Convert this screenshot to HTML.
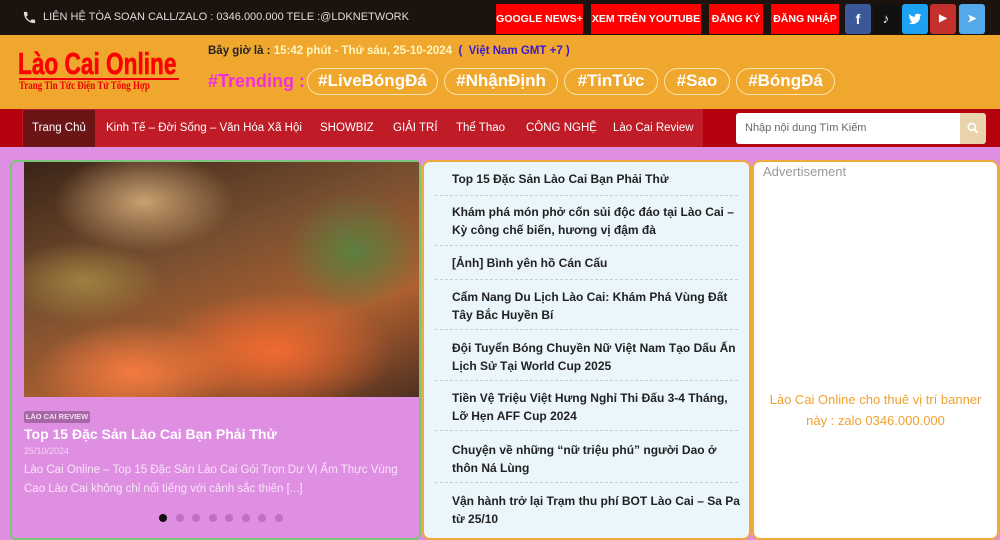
<!DOCTYPE html>
<html><head><meta charset="utf-8"><style>
*{box-sizing:border-box;margin:0;padding:0}
body{width:1000px;height:533px;overflow:hidden;background:#df8fe2;font-family:"Liberation Sans",sans-serif;position:relative}
.top{position:absolute;left:0;top:0;width:1000px;height:35px;background:#1c130f}
.top .c{position:absolute;left:43px;top:11px;color:#ddd;font-size:11px;white-space:nowrap}
.rb{position:absolute;top:4px;height:30px;background:#f00;color:#fff;font-weight:bold;font-size:10.5px;line-height:30px;text-align:center;white-space:nowrap}
.sb{position:absolute;top:4px;width:26px;height:30px;border-radius:3px;color:#fff;font-weight:bold;font-size:14px;text-align:center;line-height:30px}
.hd{position:absolute;left:0;top:35px;width:1000px;height:74px;background:#f0a72e}
.logo{position:absolute;left:18px;top:46px;color:#f00;font-weight:bold;font-size:31px;white-space:nowrap;transform:scaleX(0.73);transform-origin:left;-webkit-text-stroke:0.6px #f00}
.logo2{position:absolute;left:19px;top:78px;color:#e00;font-family:"Liberation Serif",serif;font-size:11.5px;font-weight:bold;border-top:2px solid #e00;white-space:nowrap;width:205px;transform:scaleX(0.78);transform-origin:left}
.time{position:absolute;left:208px;top:45px;font-size:11.5px;font-weight:bold;color:#222;white-space:nowrap}
.tr{position:absolute;left:208px;top:71px;color:#f030e0;font-size:18px;font-weight:bold}
.tag{position:absolute;top:68px;height:27px;border:1.5px solid #fbe5b0;border-radius:14px;color:#fff;font-weight:bold;font-size:17px;line-height:24px;text-align:center;white-space:nowrap}
.nav{position:absolute;left:0;top:109px;width:1000px;height:38px;background:#b5000e}
.navi{position:absolute;left:22px;top:0;width:681px;height:38px;background:#c01c27}
.nav span{position:absolute;top:13px;color:#fff;font-size:11.5px;white-space:nowrap}
.act{position:absolute;left:23px;top:1px;width:72px;height:37px;background:#6b1517}
.srch{position:absolute;left:736px;top:113px;width:224px;height:31px;background:#fff;border-radius:3px 0 0 3px;font-size:11px;color:#666;padding:9px 0 0 9px}
.sbtn{position:absolute;left:960px;top:113px;width:26px;height:31px;background:#e8d3ab;border-radius:0 3px 3px 0}
.left{position:absolute;left:10px;top:160px;width:411px;height:380px;border:2px solid #7bc47b;border-radius:6px;background:#df8fe2}
.img{position:absolute;left:24px;top:162px;width:395px;height:235px;background:
radial-gradient(ellipse 90px 50px at 120px 40px,#c9a070,transparent),
radial-gradient(ellipse 120px 60px at 250px 190px,#f06a30,transparent),
radial-gradient(ellipse 100px 50px at 110px 210px,#f47a40,transparent),
radial-gradient(ellipse 70px 60px at 330px 90px,#5c8040,transparent),
radial-gradient(ellipse 80px 40px at 60px 120px,#a08040,transparent),
linear-gradient(160deg,#3a2418,#7a5030 40%,#b06030 70%,#503020)}
.mid{position:absolute;left:422px;top:160px;width:329px;height:380px;background:#eaf6fc;border:2px solid #f0a83a;border-radius:8px}
.it{position:absolute;left:452px;width:292px;font-size:12px;font-weight:bold;color:#222;line-height:18px}
.sep{position:absolute;left:435px;width:303px;border-top:1px dashed #ccc}
.right{position:absolute;left:752px;top:160px;width:247px;height:380px;background:#fff;border:2px solid #f0a83a;border-radius:8px}
.dot{position:absolute;top:514px;width:8px;height:8px;border-radius:50%;background:#c070c0}
</style></head><body>
<div class="top"><svg style="position:absolute;left:22px;top:10px" width="15" height="15" viewBox="0 0 24 24"><path fill="#ddd" d="M6.6 10.8c1.4 2.8 3.8 5.1 6.6 6.6l2.2-2.2c.3-.3.7-.4 1-.2 1.1.4 2.3.6 3.6.6.6 0 1 .4 1 1V20c0 .6-.4 1-1 1C10.6 21 3 13.4 3 4c0-.6.4-1 1-1h3.5c.6 0 1 .4 1 1 0 1.3.2 2.5.6 3.6.1.3 0 .7-.2 1z"/></svg><span class="c">LIÊN HỆ TÒA SOẠN CALL/ZALO : 0346.000.000 TELE :@LDKNETWORK</span>
<div class="rb" style="left:496px;width:87px">GOOGLE NEWS+</div>
<div class="rb" style="left:591px;width:110px">XEM TRÊN YOUTUBE</div>
<div class="rb" style="left:709px;width:54px">ĐĂNG KÝ</div>
<div class="rb" style="left:771px;width:68px">ĐĂNG NHẬP</div>
<div class="sb" style="left:845px;background:#3b5998">f</div>
<div class="sb" style="left:873px;background:#111;font-size:13px">♪</div>
<div class="sb" style="left:902px;background:#1da1f2"><svg width="14" height="14" viewBox="0 0 24 24" style="margin-top:8px"><path fill="#fff" d="M23 5c-.8.4-1.7.6-2.6.7.9-.6 1.6-1.4 2-2.5-.9.5-1.9.9-2.9 1.1A4.5 4.5 0 0 0 11.800 8.400 12.8 12.8 0 0 1 2.500 3.700a4.5 4.5 0 0 0 1.400 6c-.7 0-1.400-.2-2-.6 0 2.200 1.600 4 3.600 4.400-.7.2-1.400.2-2 .1.6 1.800 2.200 3.100 4.200 3.100A9 9 0 0 1 1 18.600 12.800 12.800 0 0 0 20.700 7.200z"/></svg></div>
<div class="sb" style="left:930px;background:#c4302b;font-size:10px">▶</div>
<div class="sb" style="left:959px;background:#54a9eb;font-size:11px">➤</div>
</div>
<div class="hd"></div>
<div class="logo">Lào Cai Online</div>
<div class="logo2">Trang Tin Tức Điện Tử Tổng Hợp</div>
<div class="time">Bây giờ là : <span style="color:#fff6c0">15:42 phút - Thứ sáu, 25-10-2024</span> &nbsp;<span style="color:#3a1ad0">( &nbsp;Việt Nam GMT +7 )</span></div>
<div class="tr">#Trending :</div>
<div class="tag" style="left:307px;width:131px">#LiveBóngĐá</div>
<div class="tag" style="left:444px;width:114px">#NhậnĐịnh</div>
<div class="tag" style="left:564px;width:94px">#TinTức</div>
<div class="tag" style="left:664px;width:66px">#Sao</div>
<div class="tag" style="left:736px;width:99px">#BóngĐá</div>
<div class="nav"><div class="navi"></div><div class="act"></div>
<span style="left:32px">Trang Chủ</span><span style="left:106px">Kinh Tế – Đời Sống – Văn Hóa Xã Hội</span><span style="left:320px">SHOWBIZ</span><span style="left:393px">GIẢI TRÍ</span><span style="left:456px">Thể Thao</span><span style="left:526px">CÔNG NGHỆ</span><span style="left:613px">Lào Cai Review</span></div>
<div class="srch">Nhập nội dung Tìm Kiếm</div>
<div class="sbtn"><svg style="margin:8px 6px" width="14" height="14" viewBox="0 0 24 24"><circle cx="10" cy="10" r="6" fill="none" stroke="#fff" stroke-width="3"/><path d="M14.5 14.5L20 20" stroke="#fff" stroke-width="3"/></svg></div>
<div class="left"></div>
<div class="img"></div>
<div style="position:absolute;left:24px;top:411px;width:66px;height:12px;background:#a868a8;border-radius:2px;color:#f0e0f0;font-size:7.5px;font-weight:bold;line-height:12px;text-align:center;white-space:nowrap">LÀO CAI REVIEW</div>
<div style="position:absolute;left:24px;top:426px;color:#fff;font-weight:bold;font-size:14px;white-space:nowrap">Top 15 Đặc Sản Lào Cai Bạn Phải Thử</div>
<div style="position:absolute;left:24px;top:446px;color:#f4d4f4;font-size:9px">25/10/2024</div>
<div style="position:absolute;left:24px;top:461px;width:395px;color:#f8e4f8;font-size:11.5px;line-height:19px">Lào Cai Online – Top 15 Đặc Sản Lào Cai Gói Trọn Dư Vị Ẩm Thực Vùng Cao Lào Cai không chỉ nổi tiếng với cảnh sắc thiên [...]</div>
<div class="dot" style="left:159px;background:#111"></div><div class="dot" style="left:176px"></div><div class="dot" style="left:192px"></div><div class="dot" style="left:209px"></div><div class="dot" style="left:225px"></div><div class="dot" style="left:242px"></div><div class="dot" style="left:258px"></div><div class="dot" style="left:275px"></div>
<div class="mid"></div>
<div class="it" style="top:170px">Top 15 Đặc Sản Lào Cai Bạn Phải Thử</div>
<div class="sep" style="top:195px"></div>
<div class="it" style="top:203px">Khám phá món phở cốn sủi độc đáo tại Lào Cai – Kỳ công chế biến, hương vị đậm đà</div>
<div class="sep" style="top:245px"></div>
<div class="it" style="top:254px">[Ảnh] Bình yên hồ Cán Cấu</div>
<div class="sep" style="top:279px"></div>
<div class="it" style="top:288px">Cẩm Nang Du Lịch Lào Cai: Khám Phá Vùng Đất Tây Bắc Huyền Bí</div>
<div class="sep" style="top:329px"></div>
<div class="it" style="top:339px">Đội Tuyển Bóng Chuyền Nữ Việt Nam Tạo Dấu Ấn Lịch Sử Tại World Cup 2025</div>
<div class="sep" style="top:380px"></div>
<div class="it" style="top:389px">Tiền Vệ Triệu Việt Hưng Nghỉ Thi Đấu 3-4 Tháng, Lỡ Hẹn AFF Cup 2024</div>
<div class="sep" style="top:430px"></div>
<div class="it" style="top:441px">Chuyện về những “nữ triệu phú” người Dao ở thôn Ná Lùng</div>
<div class="sep" style="top:482px"></div>
<div class="it" style="top:492px">Vận hành trở lại Trạm thu phí BOT Lào Cai – Sa Pa từ 25/10</div>
<div class="right"></div>
<div style="position:absolute;left:763px;top:164px;color:#999;font-size:13px">Advertisement</div>
<div style="position:absolute;left:758px;top:389px;width:235px;text-align:center;color:#f0a030;font-size:13px;line-height:21px">Lào Cai Online cho thuê vị trí banner này : zalo 0346.000.000</div>
</body></html>
